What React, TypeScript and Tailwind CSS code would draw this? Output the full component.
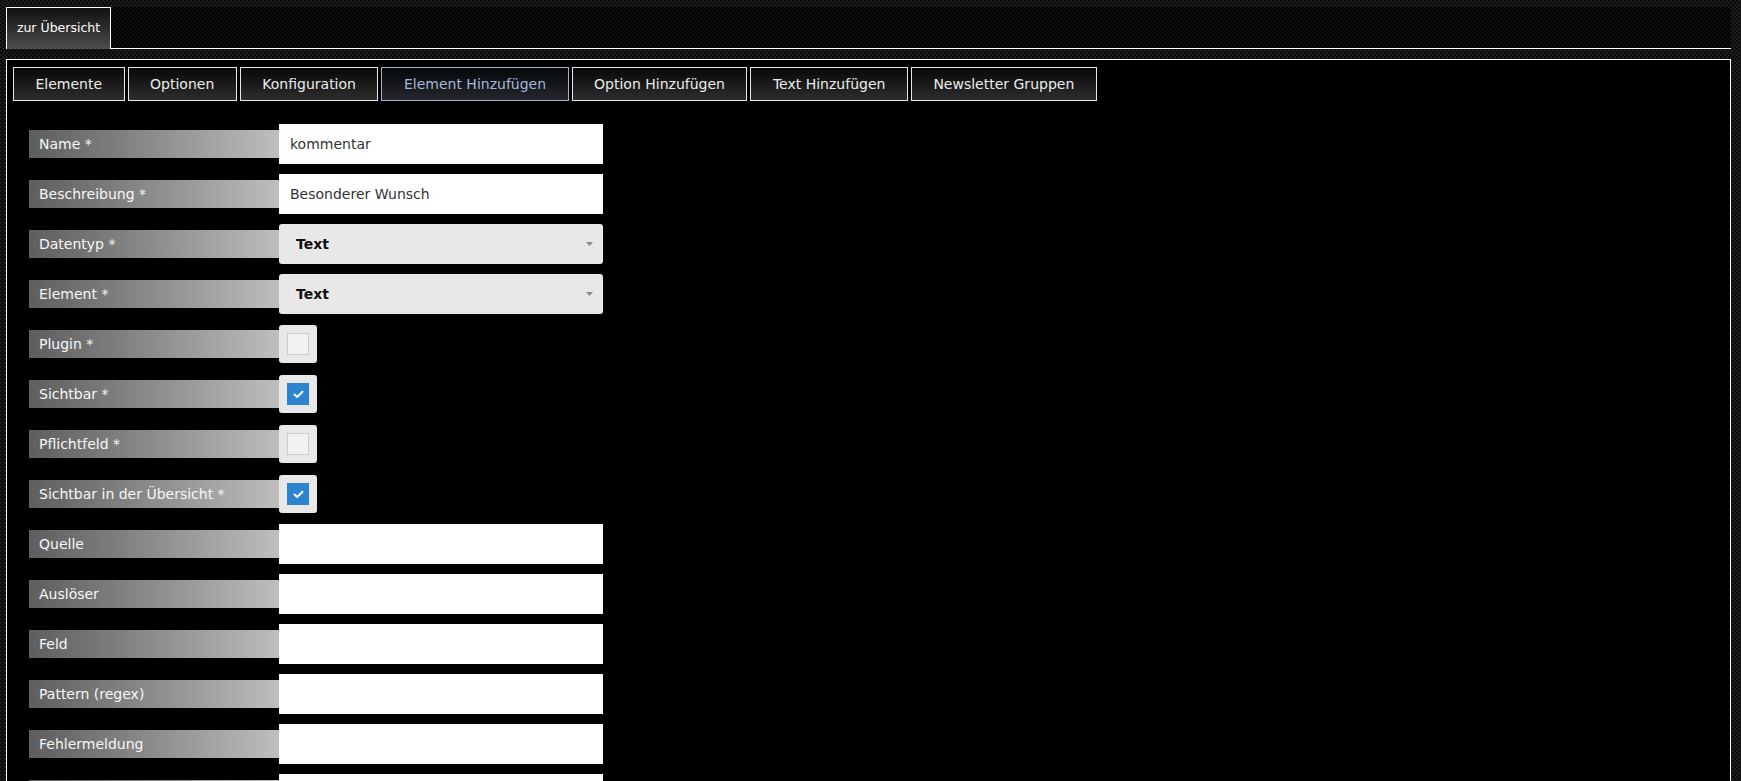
import React from "react";

const tabs = [
  "Elemente",
  "Optionen",
  "Konfiguration",
  "Element Hinzufügen",
  "Option Hinzufügen",
  "Text Hinzufügen",
  "Newsletter Gruppen",
];

type Field =
  | { label: string; kind: "text"; value?: string }
  | { label: string; kind: "select"; value: string }
  | { label: string; kind: "check"; checked: boolean };

const fields: Field[] = [
  { label: "Name *", kind: "text", value: "kommentar" },
  { label: "Beschreibung *", kind: "text", value: "Besonderer Wunsch" },
  { label: "Datentyp *", kind: "select", value: "Text" },
  { label: "Element *", kind: "select", value: "Text" },
  { label: "Plugin *", kind: "check", checked: false },
  { label: "Sichtbar *", kind: "check", checked: true },
  { label: "Pflichtfeld *", kind: "check", checked: false },
  { label: "Sichtbar in der Übersicht *", kind: "check", checked: true },
  { label: "Quelle", kind: "text" },
  { label: "Auslöser", kind: "text" },
  { label: "Feld", kind: "text" },
  { label: "Pattern (regex)", kind: "text" },
  { label: "Fehlermeldung", kind: "text" },
  { label: "", kind: "text" },
];

function Checkbox({ checked }: { checked: boolean }) {
  return (
    <div className="w-[38px] h-[38px] rounded-[3px] bg-[#e8e8e8] flex items-center justify-center">
      {checked ? (
        <div className="w-[22px] h-[22px] bg-[#2c84cf] flex items-center justify-center">
          <svg width="11" height="9" viewBox="0 0 11 9" fill="none">
            <polyline
              points="1.5,4.5 4.2,7 9.5,1.8"
              stroke="#fff"
              strokeWidth="2"
              strokeLinecap="round"
              strokeLinejoin="round"
            />
          </svg>
        </div>
      ) : (
        <div className="w-[22px] h-[22px] bg-[#f2f2f2] border border-[#cdcdcd]" />
      )}
    </div>
  );
}

export default function App() {
  return (
    <div className="h-[781px] w-full overflow-hidden bg-[#111] bg-[image:repeating-conic-gradient(#1e1e1e_0_25%,#090909_0_50%)] bg-[length:4px_4px] pt-[7px] pl-[6px] pr-[10px] font-['DejaVu_Sans',sans-serif]">
      {/* Header with back tab */}
      <div className="flex h-[42px]">
        <div className="w-[105px] h-full border-t border-l border-r border-white bg-linear-to-b from-[#111] to-[#4e4e4e] flex items-center justify-center text-[12.5px] text-white">
          zur Übersicht
        </div>
        <div className="flex-1 h-full border-b border-white bg-black/60" />
      </div>

      {/* Main panel */}
      <div className="mt-[10px] h-[800px] border border-white bg-black pt-[7px] pl-[6px]">
        {/* Tabs */}
        <div className="flex gap-[3px]">
          {tabs.map((t) => {
            const active = t === "Element Hinzufügen";
            return (
              <div
                key={t}
                className={
                  active
                    ? "h-[34px] px-[21.5px] flex items-center border border-[#a3b3cd] bg-linear-to-b from-[#07080a] to-[#25272c] text-[14px] text-[#a3b7d8]"
                    : "h-[34px] px-[21.5px] flex items-center border border-[#e6e6e6] bg-linear-to-b from-[#080808] to-[#2e2e2e] text-[14px] text-[#ececec]"
                }
              >
                {t}
              </div>
            );
          })}
        </div>

        {/* Form */}
        <div className="ml-[16px] mt-[23px]">
          {fields.map((f, i) => (
            <div key={i} className="flex items-center h-[40px] mb-[10px]">
              <div className="w-[250px] h-[28px] pl-[10px] pt-[1px] flex items-center bg-linear-to-r from-[#5e5e5e] to-[#bebebe] text-[14px] text-[#f7f7f7]">
                {f.label}
              </div>
              {f.kind === "text" && (
                <div className="w-[324px] h-[40px] bg-white pl-[11px] pt-[1px] flex items-center text-[14px] text-[#333]">
                  {f.value}
                </div>
              )}
              {f.kind === "select" && (
                <div className="w-[324px] h-[40px] rounded-[3px] bg-[#e8e8e8] pl-[17px] pr-[10px] flex items-center justify-between text-[14px] font-bold text-[#111]">
                  <span>{f.value}</span>
                  <svg width="7" height="4" viewBox="0 0 7 4">
                    <polygon points="0,0 7,0 3.5,4" fill="#8a8a8a" />
                  </svg>
                </div>
              )}
              {f.kind === "check" && <Checkbox checked={f.checked} />}
            </div>
          ))}
        </div>
      </div>
    </div>
  );
}
